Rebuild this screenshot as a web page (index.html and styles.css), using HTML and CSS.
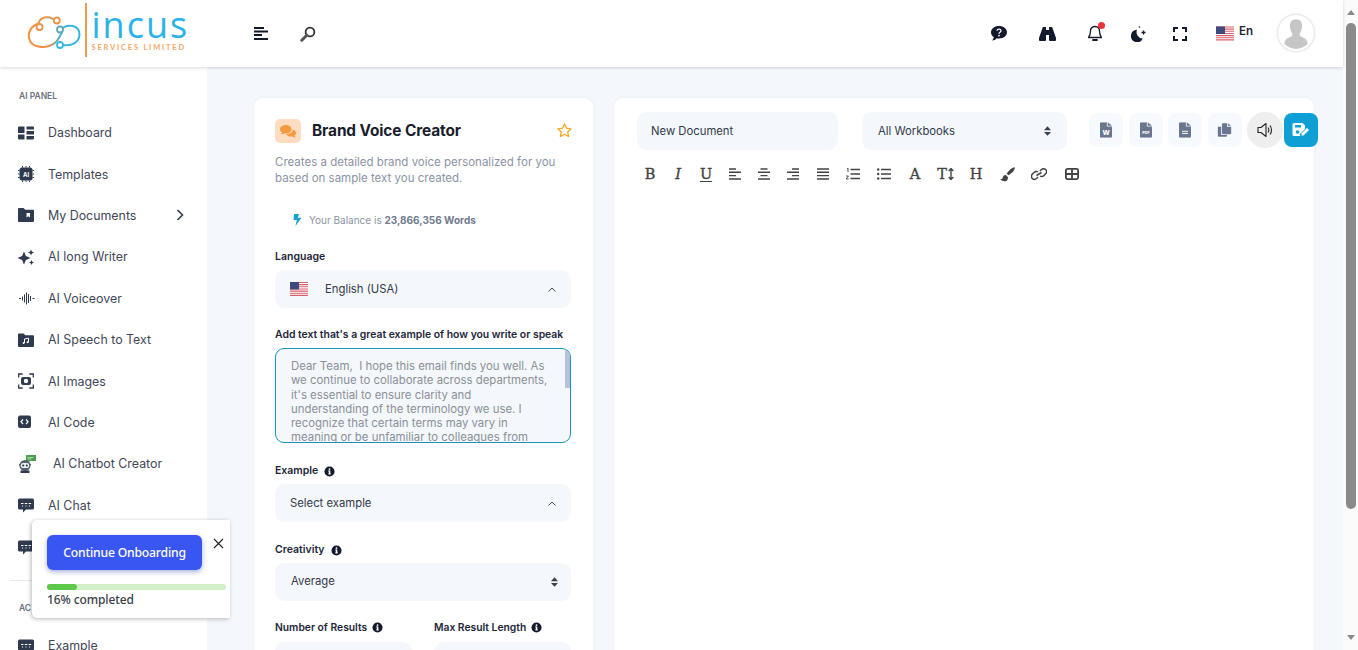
FILE: index.html
```html
<!DOCTYPE html>
<html lang="en">
<head>
<meta charset="utf-8">
<title>Brand Voice Creator</title>
<link rel="stylesheet" href="styles.css">
</head>
<body>
<svg class="defs" width="0" height="0" aria-hidden="true">
  <defs>
    <symbol id="flag" viewBox="0 0 18 14">
      <rect width="18" height="14" fill="#fff"/>
      <path d="M0 .5h18M0 2.65h18M0 4.8h18M0 6.95h18M0 9.1h18M0 11.25h18M0 13.4h18" stroke="#d8606c" stroke-width="1.1"/>
      <rect width="9" height="7.5" fill="#3f4a7c"/>
    </symbol>
    <symbol id="info" viewBox="0 0 12 12">
      <circle cx="6" cy="6" r="5.5" fill="#141a2e"/>
      <rect x="5.2" y="5" width="1.7" height="4" fill="#fff"/>
      <rect x="4.6" y="5" width="1.5" height=".9" fill="#fff"/>
      <rect x="4.6" y="8.2" width="2.9" height=".9" fill="#fff"/>
      <circle cx="6" cy="3.4" r="1" fill="#fff"/>
    </symbol>
    <symbol id="chat" viewBox="0 0 16 16">
      <path d="M1.500 1.500h13a1.500 1.500 0 0 1 1.500 1.500v8a1.500 1.500 0 0 1-1.500 1.500H8l-3 3v-3H1.500A1.500 1.500 0 0 1 0 11V3a1.500 1.500 0 0 1 1.500-1.500z" fill="#2f3a4f"/>
      <path d="M3 6.500h2.500M6.800 6.500h2.500M10.600 6.500h2.500M4 9h1M7.500 9h1M11 9h1" stroke="#fff" stroke-width="1"/>
    </symbol>
    <symbol id="file" viewBox="0 0 14 18">
      <path d="M1.500 0H8v5h6v11.500a1.500 1.500 0 0 1-1.500 1.500h-11A1.500 1.500 0 0 1 0 16.500v-15A1.500 1.500 0 0 1 1.500 0zM9 0l5 4H9z" fill="#6a768f"/>
    </symbol>
  </defs>
</svg>

<div class="page">
  <header class="topbar">
    <div class="logo">
      <svg class="logo-mark" width="58" height="36" viewBox="0 0 58 36" aria-hidden="true">
        <defs><linearGradient id="lg" x1="0" x2="1"><stop offset="0" stop-color="#ee9244"/><stop offset=".55" stop-color="#ee9244"/><stop offset="1" stop-color="#38b6e0"/></linearGradient></defs>
        <path d="M29 7.500C24 1 13 2 11.500 9.500 4 12 -.5 19 3 27c3 6 13 7 19 5 6-2 9-5 13-14" fill="none" stroke="url(#lg)" stroke-width="2"/>
        <path d="M33 16.500C40 8.500 53 11 52.500 21c-.5 8-9 11.500-17.500 10" fill="none" stroke="#38b6e0" stroke-width="2"/>
        <circle cx="29.800" cy="6.500" r="3" fill="#fff" stroke="#ee9244" stroke-width="1.800"/>
        <circle cx="12.500" cy="13" r="3" fill="#fff" stroke="#ee9244" stroke-width="1.800"/>
        <circle cx="33" cy="15.500" r="3" fill="#fff" stroke="#5fa9b5" stroke-width="1.800"/>
        <circle cx="33" cy="31" r="3" fill="#fff" stroke="#38b6e0" stroke-width="1.800"/>
      </svg>
      <span class="logo-rule"></span>
      <div class="logo-text">
        <span class="logo-name">incus</span>
        <span class="logo-sub">SERVICES LIMITED</span>
      </div>
    </div>
    <div class="top-left">
      <svg width="14" height="13" viewBox="0 0 14 13" aria-hidden="true"><path d="M0 1h10M0 4.500h14M0 8h8M0 12h14" stroke="#141a2e" stroke-width="1.800"/></svg>
      <svg width="16" height="16" viewBox="0 0 16 16" aria-hidden="true"><circle cx="10" cy="6" r="4.400" fill="none" stroke="#333" stroke-width="1.800"/><path d="M6.800 9.200 1.800 14.200" stroke="#555" stroke-width="3" stroke-linecap="round"/></svg>
    </div>
    <div class="top-right">
      <svg class="ti-help" width="16" height="15" viewBox="0 0 16 15" aria-hidden="true"><path d="M8 0c4.400 0 8 2.700 8 6.200s-3.600 6.200-8 6.200c-.8 0-1.500-.1-2.200-.2C4.500 13.500 3 14.500 1 14.500c1-1 1.700-2.200 1.800-3.500C1 10 0 8.200 0 6.200 0 2.700 3.600 0 8 0z" fill="#141a2e"/><path d="M6 4.800c.2-2.200 4-2.200 4 0 0 1.500-2 1.400-2 3" fill="none" stroke="#fff" stroke-width="1.300"/><circle cx="8" cy="9.600" r=".9" fill="#fff"/></svg>
      <svg class="ti-bino" width="17" height="14" viewBox="0 0 17 14" aria-hidden="true"><path d="M3.500 1a1 1 0 0 1 1-1h2.500v3H10V0h2.500a1 1 0 0 1 1 1l3.500 10v2a1 1 0 0 1-1 1h-5a1 1 0 0 1-1-1V8H7v5a1 1 0 0 1-1 1H1a1 1 0 0 1-1-1v-2z" fill="#141a2e"/></svg>
      <span class="bell">
        <svg width="14" height="17" viewBox="0 0 14 17" aria-hidden="true"><path d="M7 1.500c-3 0-4.500 2-4.500 4.500 0 3.500-.7 5-2 6.500h13c-1.300-1.500-2-3-2-6.500C11.500 3.500 10 1.500 7 1.500z" fill="none" stroke="#141a2e" stroke-width="1.300" stroke-linejoin="round"/><path d="M5 15h4" stroke="#141a2e" stroke-width="1.800" stroke-linecap="round"/></svg>
        <span class="dot"></span>
      </span>
      <svg class="ti-moon" width="16" height="16" viewBox="0 0 16 16" aria-hidden="true"><path d="M6 3.800a6.200 6.200 0 1 0 5.800 8.800A6.500 6.500 0 0 1 6 3.800z" fill="#141a2e"/><path d="M12.500 4.500v4M10.500 6.500h4" stroke="#141a2e" stroke-width="1.300"/><circle cx="8.500" cy="1" r=".8" fill="#141a2e"/></svg>
      <svg class="ti-full" width="14" height="14" viewBox="0 0 14 14" aria-hidden="true"><path d="M1 5V1h4M9 1h4v4M13 9v4H9M5 13H1V9" fill="none" stroke="#141a2e" stroke-width="2"/></svg>
      <span class="lang"><svg width="18" height="15" aria-hidden="true"><use href="#flag"/></svg><span>En</span></span>
      <span class="avatar">
        <svg width="36" height="36" viewBox="0 0 34 34" aria-hidden="true"><path d="M17 4c4 0 6 3 5.700 7-.2 3-1.200 5-2.200 6.500-.5 1 0 2.500 2 3.300 3 1.200 5 2.200 5.500 6.700-3 3-7 4.500-11 4.500s-8-1.500-11-4.500c.5-4.500 2.500-5.500 5.500-6.700 2-.8 2.500-2.300 2-3.300-1-1.500-2-3.500-2.200-6.500C11 7 13 4 17 4z" fill="#c4c6c8"/></svg>
      </span>
    </div>
  </header>

  <div class="shell">
    <aside class="sidebar">
      <div class="side-label">AI PANEL</div>
      <nav class="nav">
        <a class="nav-item"><svg class="nav-ico" viewBox="0 0 16 16" aria-hidden="true"><path d="M1 1.500h5.500v6.500H0V2.500a1 1 0 0 1 1-1zM0 9.500h6.500v5H1a1 1 0 0 1-1-1zM8.500 1.500H15a1 1 0 0 1 1 1V4.500H8.500zM8.500 6H16v3.500H8.500zM8.500 11H16v2.500a1 1 0 0 1-1 1H8.500z" fill="#2f3a4f"/></svg>Dashboard</a>
        <a class="nav-item"><svg class="nav-ico" viewBox="0 0 16 16" aria-hidden="true"><path d="M1.500 4.500h-1.500M1.500 8h-1.500M1.500 11.500h-1.500M14.500 4.500H16M14.500 8H16M14.500 11.500H16M4.500 1.500V0M8 1.500V0M11.500 1.500V0M4.500 14.500V16M8 14.500V16M11.500 14.500V16" stroke="#2f3a4f"/><rect x="1.500" y="1.500" width="13" height="13" rx="2.500" fill="#2f3a4f"/><text x="8" y="10.600" class="chip-text">AI</text></svg>Templates</a>
        <a class="nav-item nav-more"><svg class="nav-ico" viewBox="0 0 16 16" aria-hidden="true"><path d="M0 2a1 1 0 0 1 1-1h4.500l1.800 1.800H15a1 1 0 0 1 1 1V14a1 1 0 0 1-1 1H1a1 1 0 0 1-1-1z" fill="#2f3a4f"/><path d="M8.500 6h3.500v4.500l-1.700-1.300-1.800 1.300z" fill="#fff"/></svg><span>My Documents</span><svg class="chev" width="8" height="12" viewBox="0 0 8 12" aria-hidden="true"><path d="m1.500 1 5 5-5 5" fill="none" stroke="#2f3a4f" stroke-width="1.600"/></svg></a>
        <a class="nav-item"><svg class="nav-ico" viewBox="0 0 16 16" aria-hidden="true"><path d="M6 2.500 7.900 7.100 12.500 9 7.900 10.900 6 15.500 4.100 10.900-.5 9l4.600-1.900zM13 .5l.9 2.100 2.100.9-2.100.9L13 6.500l-.9-2.100-2.100-.9 2.100-.9zM13.500 11l.8 1.700 1.700.8-1.700.8-.8 1.700-.8-1.700-1.700-.8 1.700-.8z" fill="#2f3a4f"/></svg>AI long Writer</a>
        <a class="nav-item"><svg class="nav-ico ico-wave" viewBox="0 0 16 16" aria-hidden="true"><path d="M1 8.500h2M4.500 6.500v4M6.500 4.500v8M8.500 2.500v12M10.500 4v9M12.500 6v5M14.500 8.500h2" stroke="#2f3a4f" stroke-width="1"/></svg>AI Voiceover</a>
        <a class="nav-item"><svg class="nav-ico" viewBox="0 0 16 16" aria-hidden="true"><path d="M0 2.500a1 1 0 0 1 1-1h4.500l1.800 1.800H15a1 1 0 0 1 1 1V14a1 1 0 0 1-1 1H1a1 1 0 0 1-1-1z" fill="#2f3a4f"/><path d="M6.500 11V7l4-.8v4" fill="none" stroke="#fff"/><circle cx="5.600" cy="11" r="1" fill="#fff"/><circle cx="9.600" cy="10.300" r="1" fill="#fff"/></svg>AI Speech to Text</a>
        <a class="nav-item"><svg class="nav-ico" viewBox="0 0 16 16" aria-hidden="true"><path d="M.7 4.500V1h4M11.300 1h4v3.500M15.300 11.500V15h-4M4.700 15h-4v-3.500" fill="none" stroke="#2f3a4f" stroke-width="1.300"/><rect x="3" y="4" width="10" height="8" rx="2" fill="#2f3a4f"/><circle cx="8" cy="8" r="2.200" fill="#fff"/></svg>AI Images</a>
        <a class="nav-item"><svg class="nav-ico" viewBox="0 0 16 16" aria-hidden="true"><rect y="1.500" width="13" height="12.500" rx="2" fill="#2f3a4f"/><path d="M5 5.500 3 7.800l2 2.200M8 5.500l2 2.300-2 2.200" fill="none" stroke="#fff" stroke-width="1.200"/></svg>AI Code</a>
        <a class="nav-item nav-bot"><svg class="nav-ico" viewBox="0 0 18 18" aria-hidden="true"><path d="M8 0h10v6h-6l-2 2V6H8z" fill="#4a9d4a"/><path d="M9.500 2.500h6M9.500 4h4" stroke="#d6ecd6" stroke-width=".7"/><circle cx="7" cy="10.500" r="5.500" fill="#5a6270"/><rect x="1" y="9" width="12" height="1.500" fill="#5a6270"/><rect x="2.800" y="8" width="8.400" height="5" rx="2.200" fill="#eef0f2"/><circle cx="5.200" cy="10.500" r="1.100" fill="#2f3a4f"/><circle cx="8.800" cy="10.500" r="1.100" fill="#2f3a4f"/><path d="M2.500 18v-2.500h9V18z" fill="#2f3a4f"/></svg>AI Chatbot Creator</a>
        <a class="nav-item"><svg class="nav-ico" aria-hidden="true"><use href="#chat"/></svg>AI Chat</a>
        <a class="nav-item"><svg class="nav-ico" aria-hidden="true"><use href="#chat"/></svg></a>
      </nav>
      <hr class="side-rule">
      <div class="side-label side-label-2">AC</div>
      <a class="nav-item"><svg class="nav-ico" aria-hidden="true"><use href="#chat"/></svg>Example</a>
    </aside>

    <main class="main">
      <section class="card form-card">
        <div class="title-row">
          <span class="title-ico">
            <svg width="16" height="13" viewBox="0 0 16 13" aria-hidden="true"><path d="M6 0c3 0 5.500 1.800 5.500 4.200S9 8.400 6 8.400c-.5 0-1 0-1.400-.1C3.500 9 2.500 9.300 1 9.300c.7-.6 1.100-1.300 1.200-2C.8 6.500 0 5.400 0 4.200 0 1.800 3 0 6 0z" fill="#f59a3e"/><path d="M12.500 4.500c2 .4 3.500 1.700 3.500 3.400 0 1-.5 1.900-1.500 2.500 0 .7.400 1.400 1 2-1.300 0-2.300-.4-3.200-1-3 .4-5.300-.6-6-2.500 4 .3 6.700-1.700 6.200-4.400z" fill="#f59a3e"/></svg>
          </span>
          <h1 class="title">Brand Voice Creator</h1>
          <svg class="star" width="15" height="14" viewBox="0 0 15 14" aria-hidden="true"><path d="m7.500 1 2 4.200 4.600.6-3.400 3.200.9 4.500-4.100-2.200-4.100 2.200.9-4.500L.9 5.800l4.600-.6z" fill="none" stroke="#f5a623" stroke-width="1.300" stroke-linejoin="round"/></svg>
        </div>
        <p class="desc">Creates a detailed brand voice personalized for you based on sample text you created.</p>
        <div class="balance">
          <svg width="9" height="12" viewBox="0 0 9 12" aria-hidden="true"><path d="M1 0h5L4.800 3.800H8.500L2.500 12l1.300-6H.5z" fill="#1aa3d1"/></svg>
          <span>Your Balance is <b>23,866,356 Words</b></span>
        </div>
        <label class="label">Language</label>
        <div class="select select-lang">
          <svg width="18" height="14" aria-hidden="true"><use href="#flag"/></svg>
          <span class="select-text">English (USA)</span>
          <svg class="caret" width="8" height="5" viewBox="0 0 8 5" aria-hidden="true"><path d="M.5 4.500 4 1l3.500 3.500" fill="none" stroke="#333" stroke-width=".9"/></svg>
        </div>
        <label class="label label-strong">Add text that's a great example of how you write or speak</label>
        <div class="textarea">
          Dear Team,&nbsp; I hope this email finds you well. As<br>
          we continue to collaborate across departments,<br>
          it's essential to ensure clarity and<br>
          understanding of the terminology we use. I<br>
          recognize that certain terms may vary in<br>
          meaning or be unfamiliar to colleagues from
          <span class="ta-thumb"></span>
        </div>
        <label class="label label-info">Example <svg width="11" height="11" aria-hidden="true"><use href="#info"/></svg></label>
        <div class="select">
          <span>Select example</span>
          <svg class="caret" width="8" height="5" viewBox="0 0 8 5" aria-hidden="true"><path d="M.5 4.500 4 1l3.500 3.500" fill="none" stroke="#333" stroke-width=".9"/></svg>
        </div>
        <label class="label label-info">Creativity <svg width="11" height="11" aria-hidden="true"><use href="#info"/></svg></label>
        <div class="select select-native">
          <span>Average</span>
          <svg class="updown" width="7" height="10" viewBox="0 0 8 11" aria-hidden="true"><path d="M4 0 8 4.500H0zM4 11 0 6.500h8z" fill="#3a4252"/></svg>
        </div>
        <div class="two-col">
          <div class="col">
            <label class="label label-info label-small">Number of Results <svg width="11" height="11" aria-hidden="true"><use href="#info"/></svg></label>
            <div class="select"></div>
          </div>
          <div class="col">
            <label class="label label-info label-small">Max Result Length <svg width="11" height="11" aria-hidden="true"><use href="#info"/></svg></label>
            <div class="select"></div>
          </div>
        </div>
      </section>

      <section class="card doc-card">
        <div class="doc-top">
          <div class="field field-doc">New Document</div>
          <div class="field field-book"><span>All Workbooks</span><svg width="7" height="10" viewBox="0 0 8 11" aria-hidden="true"><path d="M4 0 8 4.500H0zM4 11 0 6.500h8z" fill="#3a4252"/></svg></div>
          <div class="doc-actions">
            <span class="act"><svg width="12" height="16" viewBox="0 0 14 18" aria-hidden="true"><use href="#file"/><text x="7" y="15" class="file-text">W</text></svg></span>
            <span class="act"><svg width="12" height="16" viewBox="0 0 14 18" aria-hidden="true"><use href="#file"/><text x="7" y="13.500" class="file-text file-pdf">PDF</text></svg></span>
            <span class="act"><svg width="12" height="16" viewBox="0 0 14 18" aria-hidden="true"><use href="#file"/><path d="M3.500 10.500h7M3.500 13h7" stroke="#fff" stroke-width="1.100"/></svg></span>
            <span class="act"><svg width="15" height="16" viewBox="0 0 18 18" aria-hidden="true"><path d="M7 1h5v4h5v8a1 1 0 0 1-1 1H7a1 1 0 0 1-1-1V2a1 1 0 0 1 1-1zM13 1l4 3h-4z" fill="#6a768f"/><path d="M1 5h4v9a1 1 0 0 0 1 1h6v1a1 1 0 0 1-1 1H2a1 1 0 0 1-1-1z" fill="#6a768f"/></svg></span>
            <span class="act act-round"><svg width="16" height="16" viewBox="0 0 16 16" aria-hidden="true"><path d="M1 5.500h3L9 1.500v13l-5-4H1z" fill="none" stroke="#222" stroke-width="1.100" stroke-linejoin="round"/><path d="M11 5.500c1 1.500 1 3.500 0 5M13 3.500c2 2.500 2 6.500 0 9" fill="none" stroke="#222" stroke-width="1.100"/></svg></span>
            <span class="act act-save"><svg width="18" height="16" viewBox="0 0 18 16" aria-hidden="true"><path d="M2 1h8.500L13 3.500V7l-5 5v2H2a1.500 1.500 0 0 1-1.500-1.500v-10A1.500 1.500 0 0 1 2 1z" fill="#fff"/><rect x="3" y="3" width="6" height="2.500" fill="#0ea0d5"/><circle cx="5.500" cy="10" r="1.800" fill="#0ea0d5"/><path d="m9.500 13.500 0-2 5.500-5.500 2 2-5.500 5.500z" fill="#fff"/></svg></span>
          </div>
        </div>
        <div class="editor-tools">
          <span class="tool w28 tool-b">B</span>
          <span class="tool w28 tool-i">I</span>
          <span class="tool w28"><span class="tool-u">U</span></span>
          <span class="tool w29"><svg class="tg" viewBox="0 0 12 12" aria-hidden="true"><path d="M0 1h7M0 4.300h12M0 7.600h7M0 11h12" stroke="#444" stroke-width="1.400"/></svg></span>
          <span class="tool w29"><svg class="tg" viewBox="0 0 12 12" aria-hidden="true"><path d="M2.500 1h7M0 4.300h12M2.500 7.600h7M0 11h12" stroke="#444" stroke-width="1.400"/></svg></span>
          <span class="tool w30"><svg class="tg" viewBox="0 0 12 12" aria-hidden="true"><path d="M5 1h7M0 4.300h12M5 7.600h7M0 11h12" stroke="#444" stroke-width="1.400"/></svg></span>
          <span class="tool w30"><svg class="tg" viewBox="0 0 12 12" aria-hidden="true"><path d="M0 1h12M0 4.300h12M0 7.600h12M0 11h12" stroke="#444" stroke-width="1.400"/></svg></span>
          <span class="tool w30"><svg class="tg tg-wide" viewBox="0 0 14 12" aria-hidden="true"><path d="M4.500 1.500H14M4.500 6H14M4.500 10.500H14" stroke="#444" stroke-width="1.500"/><path d="M1 .6 2 0v4M.2 8h2.200L.2 11h2.500" fill="none" stroke="#444" stroke-width=".9"/></svg></span>
          <span class="tool w32"><svg class="tg tg-wide" viewBox="0 0 14 12" aria-hidden="true"><path d="M4 1.500h10M4 6h10M4 10.500h10" stroke="#444" stroke-width="1.500"/><circle cx="1.200" cy="1.500" r="1.200" fill="#444"/><circle cx="1.200" cy="6" r="1.200" fill="#444"/><circle cx="1.200" cy="10.500" r="1.200" fill="#444"/></svg></span>
          <span class="tool w30">A</span>
          <span class="tool w31 tool-t">T<svg width="6" height="12" viewBox="0 0 6 12" aria-hidden="true"><path d="M3 1v10M.7 3 3 .5 5.300 3M.7 9 3 11.500 5.300 9" fill="none" stroke="#444" stroke-width="1.400"/></svg></span>
          <span class="tool w30">H</span>
          <span class="tool w32"><svg class="tg tg-brush" viewBox="0 0 14 14" aria-hidden="true"><path d="M13.800.2c-2-.2-5.500 2.800-7.500 6l1.500 1.500c3.200-2 6.200-4.500 6-7.500zM5.500 7.500c-2 0-2.700 1.200-3 2.500-.2 1-1 1.500-2.500 1.500C2 13.500 5 14 6.500 12.500c1-1 1-2 .8-3.200z" fill="#444"/></svg></span>
          <span class="tool w31"><svg class="tg tg-link" viewBox="0 0 16 14" aria-hidden="true"><path d="M7 5c-1.500-1-3-.5-4 .5L1.500 7c-1.500 1.500-1.200 3.500-.2 4.500s3 1.300 4.500-.2L7 10M9 9c1.500 1 3 .5 4-.5L14.500 7c1.500-1.500 1.200-3.500.2-4.500s-3-1.300-4.500.2L9 4" fill="none" stroke="#444" stroke-width="1.500"/><path d="M5.500 8.500 10.500 5.500" stroke="#444" stroke-width="1.500"/></svg></span>
          <span class="tool w35"><svg class="tg tg-table" viewBox="0 0 14 12" aria-hidden="true"><rect x=".9" y=".9" width="12.200" height="10.200" rx="1.500" fill="none" stroke="#444" stroke-width="1.800"/><path d="M.9 6h12.200M7 1v10" stroke="#444" stroke-width="1.800"/></svg></span>
        </div>
      </section>
    </main>
  </div>

  <div class="onboard">
    <div class="onboard-row">
      <button class="onboard-btn" type="button">Continue Onboarding</button>
      <svg class="onboard-x" width="11" height="11" viewBox="0 0 11 11" aria-hidden="true"><path d="m1 1 9 9M10 1l-9 9" stroke="#222" stroke-width="1.100"/></svg>
    </div>
    <div class="progress"><span class="progress-fill"></span></div>
    <div class="progress-text">16% completed</div>
  </div>
</div>

<div class="scrollbar">
  <span class="sb-up"></span>
  <span class="sb-thumb"></span>
  <span class="sb-down"></span>
</div>
</body>
</html>
```
FILE: styles.css
```css
* { box-sizing: border-box; }
html, body { margin: 0; height: 650px; overflow: hidden; }
body {
  display: flex;
  font-family: "Inter", "Liberation Sans", sans-serif;
  font-size: 12px;
  color: #1f2433;
  background: #f4f8fc;
}
.defs { position: absolute; }
.page { position: relative; flex: 1; min-width: 0; height: 650px; display: flex; flex-direction: column; }

/* scrollbar */
.scrollbar { width: 15px; background: #fbfbfb; display: flex; flex-direction: column; align-items: center; }
.sb-up, .sb-down { width: 0; height: 0; border-left: 4.500px solid transparent; border-right: 4.500px solid transparent; }
.sb-up { border-bottom: 5px solid #8a8a8a; margin-top: 10px; }
.sb-thumb { width: 10px; height: 486px; margin-top: 8px; border-radius: 5px; background: #8a8a8a; flex: 0 0 auto; }
.sb-down { border-top: 5px solid #8a8a8a; margin-top: auto; margin-bottom: 10px; }

/* header */
.topbar { flex: 0 0 67px; display: flex; align-items: center; background: #fff; box-shadow: 0 1px 3px rgba(20, 30, 50, .16); position: relative; z-index: 2; }
.logo { display: flex; align-items: center; margin: -7px 0 0 27px; width: 227px; }
.logo-mark { margin-top: 3px; }
.logo-rule { width: 2px; height: 54px; background: #ef9c50; margin: 0 5px 0 -0.5px; }
.logo-text { display: flex; flex-direction: column; }
.logo-name { font-family: "Open Sans", sans-serif; font-size: 36px; line-height: 31px; letter-spacing: 2px; font-weight: 400; color: #2bb3e6; }
.logo-sub { font-family: "Lato", sans-serif; font-size: 7.500px; font-weight: 700; letter-spacing: 1.800px; line-height: 9px; color: #f0a868; margin-top: 3px; white-space: nowrap; }
.top-left { display: flex; align-items: center; gap: 32px; }
.top-right { margin-left: auto; display: flex; align-items: center; margin-right: 29px; }
.ti-help { margin-right: 32px; }
.ti-bino { margin-right: 32px; }
.bell { position: relative; display: flex; margin-right: 29px; }
.dot { position: absolute; top: -3px; right: -3px; width: 7px; height: 7px; border-radius: 50%; background: #f0323c; }
.ti-moon { margin-right: 26px; }
.ti-full { margin-right: 29px; }
.lang { display: flex; align-items: flex-start; gap: 5px; font-size: 11.500px; font-weight: 600; margin-right: 25px; line-height: 14px; }
.lang span { margin-top: -2px; }
.avatar { width: 36px; height: 36px; margin-top: -1px; border-radius: 50%; background: #fff; box-shadow: 0 0 2px 1px rgba(0, 0, 0, .13); display: flex; align-items: center; justify-content: center; overflow: hidden; }

/* shell */
.shell { flex: 1; min-height: 0; display: flex; }
.sidebar { width: 207px; background: #fff; overflow: hidden; padding-top: 24px; }
.side-label { font-size: 8.500px; font-weight: 600; color: #6b7280; padding-left: 19px; line-height: 10px; margin-bottom: 11px; }
.nav { display: flex; flex-direction: column; }
.nav-item { height: 41.400px; flex: 0 0 auto; display: flex; align-items: center; gap: 14px; padding-left: 18px; font-size: 12.400px; color: #3f4657; }
.nav-ico { width: 16px; height: 16px; flex: 0 0 16px; overflow: visible; }
.chip-text { font: 700 6px "Inter", sans-serif; fill: #fff; text-anchor: middle; }
.nav-more .chev { margin-left: 26px; }
.nav-bot { gap: 17px; }
.nav-bot .nav-ico { width: 18px; height: 18px; flex-basis: 18px; }
.side-rule { border: 0; border-top: 1px solid #e6e8ec; margin: 13px 0 0 10px; }
.side-label-2 { margin: 22px 0 12px; }

/* main */
.main { flex: 1; min-width: 0; overflow: hidden; display: flex; align-items: flex-start; gap: 21px; padding: 31px 29px 0 47px; }
.card { background: #fff; border-radius: 9px; box-shadow: 0 0 4px rgba(40, 60, 100, .05); height: 600px; flex: 0 0 auto; }
.form-card { width: 339px; padding: 21px 22px 0 21px; }
.title-row { display: flex; align-items: center; height: 24px; }
.title-ico { width: 26px; height: 24px; border-radius: 5px; background: #fddcbf; display: flex; align-items: center; justify-content: center; margin-right: 11px; }
.title { margin: -2px 0 0; font-size: 15.400px; font-weight: 700; color: #1a1d2b; flex: 1; letter-spacing: -.1px; }
.star { margin: -2px -1px 0 0; }
.desc { margin: 11px 0 0; font-size: 11.500px; line-height: 16px; color: #8b93a5; width: 292px; }
.balance { display: flex; align-items: center; gap: 7px; margin: 28px 0 0 18px; font-size: 10px; line-height: 12px; color: #8b93a5; }
.balance b { font-weight: 700; color: #717a8e; }
.label { display: block; font-size: 10.500px; font-weight: 600; line-height: 14px; color: #22263a; margin-top: 24px; }
.label-strong { margin-top: 20px; font-size: 10.400px; white-space: nowrap; }
.label-info { display: flex; align-items: center; gap: 6px; margin-top: 21px; }
.label-small { font-size: 10.300px; gap: 5px; margin-top: 19px; }
.select { height: 38px; margin-top: 6px; background: #f4f8fc; border-radius: 9px; display: flex; align-items: center; justify-content: space-between; padding: 0 15px; font-size: 11.300px; color: #33384a; }
.col .select { margin-top: 8px; }
.select-lang { justify-content: flex-start; }
.select-text { margin-left: 17px; }
.select-lang .caret { margin-left: auto; }
.select-native { padding: 0 13px 2px 16px; }
.select-native .updown { margin-top: 2px; }
.textarea { position: relative; height: 95px; margin-top: 6px; border: 1px solid #1c93b8; border-radius: 9px; background: #f4f8fc; padding: 10px 0 0 15px; font-size: 11.400px; line-height: 14.300px; color: #8b8f98; overflow: hidden; white-space: nowrap; }
.ta-thumb { position: absolute; top: 0; right: 0; width: 5px; height: 39px; background: #b6c1dc; }
.two-col { display: flex; gap: 22px; }
.col { flex: 1; }

.doc-card { width: 700px; padding: 14px 0 0 23px; overflow: visible; }
.doc-top { display: flex; align-items: flex-start; }
.field { height: 38px; flex: 0 0 auto; background: #f4f8fc; border-radius: 9px; display: flex; align-items: center; font-size: 11.300px; color: #33384a; }
.field-doc { width: 201px; padding-left: 14px; }
.field-book { width: 205px; margin-left: 24px; padding: 0 16px; justify-content: space-between; }
.doc-actions { display: flex; align-items: center; flex: 0 0 auto; margin: 0 0 0 22px; gap: 5.500px; height: 36px; }
.act { width: 34px; height: 34px; flex: 0 0 auto; border-radius: 8px; background: #f6f9fd; display: flex; align-items: center; justify-content: center; }
.act-round { width: 36px; height: 36px; border-radius: 50%; background: #eeeeee; margin-right: -4.500px; }
.act-save { background: #0ea0d5; }
.file-text { font: 800 8px "Inter", sans-serif; fill: #fff; text-anchor: middle; }
.file-pdf { font-size: 4.500px; }
.editor-tools { display: flex; align-items: center; height: 20px; margin: 14px 0 0 -1px; }
.tool { font-family: "DejaVu Serif", serif; color: #444; font-size: 14.500px; line-height: 20px; -webkit-text-stroke: .35px #444; flex: 0 0 auto; display: flex; align-items: center; justify-content: center; }
.w28 { width: 28px; } .w29 { width: 29px; } .w30 { width: 30px; } .w31 { width: 31px; } .w32 { width: 32px; } .w35 { width: 35px; }
.tool-i { font-style: italic; }
.tool-u { text-decoration: underline; text-underline-offset: 2px; }
.tool-t { gap: 1px; }
.tg { width: 12px; height: 12px; }
.tg-wide { width: 14px; }
.tg-brush { width: 15px; height: 15px; }
.tg-link { width: 16px; height: 14px; }
.tg-table { width: 14px; height: 12px; }

/* onboarding */
.onboard { position: absolute; left: 32px; top: 520px; width: 198px; height: 98px; background: #fff; border-radius: 5px 0 0 5px; box-shadow: -1px 1px 4px rgba(0, 0, 0, .28); padding: 15px 4px 0 15px; z-index: 3; font-family: "Noto Sans", sans-serif; }
.onboard-row { display: flex; align-items: flex-start; }
.onboard-btn { width: 155px; height: 35px; border: 0; border-radius: 6px; background: #3a56f2; color: #fff; font: 500 12.200px "Noto Sans", sans-serif; letter-spacing: -.2px; box-shadow: 0 2px 5px rgba(40, 60, 160, .4); padding: 0; }
.onboard-x { margin: 3px 0 0 11px; }
.progress { height: 6px; margin-top: 14px; border-radius: 3px; background: #d1f0c8; }
.progress-fill { display: block; width: 30px; height: 6px; border-radius: 3px; background: #5ec84a; }
.progress-text { font-size: 12px; line-height: 16px; color: #3a3f4a; margin-top: 2px; font-weight: 500; letter-spacing: -.1px; }
```
